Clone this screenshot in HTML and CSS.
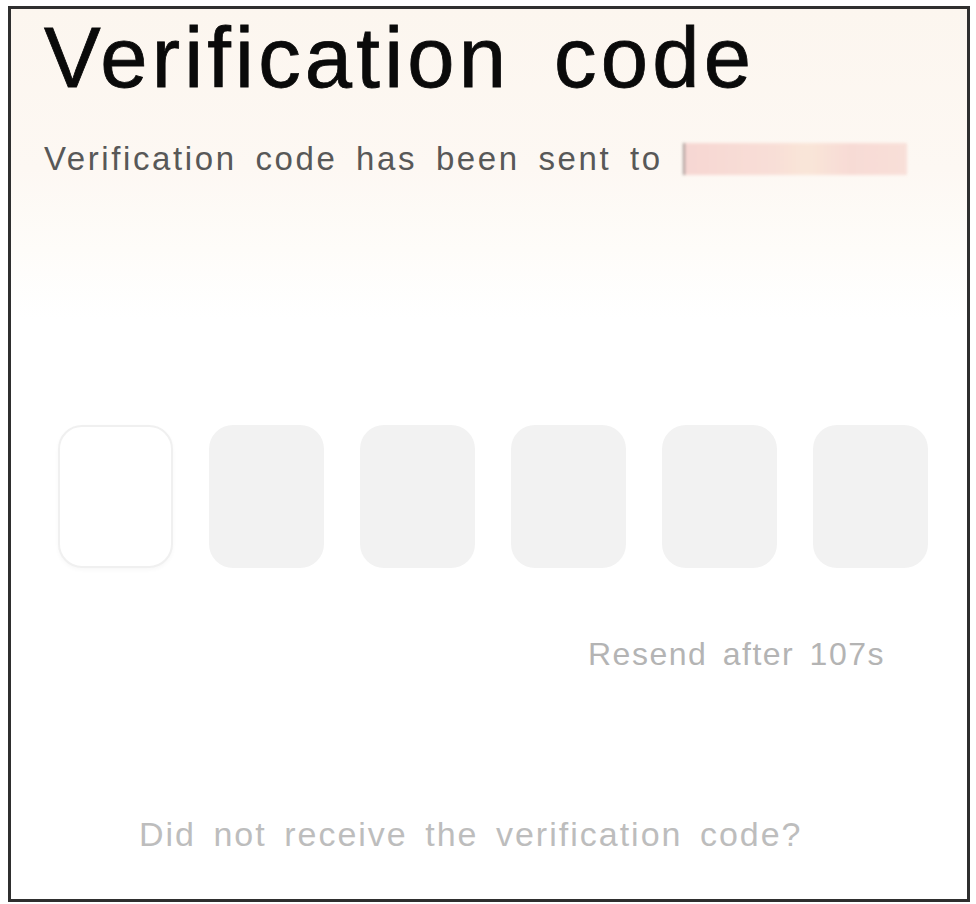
FILE: index.html
```html
<!DOCTYPE html>
<html>
<head>
<meta charset="utf-8">
<link rel="stylesheet" href="styles.css">
</head>
<body>
<div class="frame">
  <div class="screen">
    <h1 class="title">Verification code</h1>
    <p class="subtitle">Verification code has been sent to <span class="masked"><span class="masked-bar"></span></span></p>
    <div class="codes">
      <div class="code code-active"></div>
      <div class="code"></div>
      <div class="code"></div>
      <div class="code"></div>
      <div class="code"></div>
      <div class="code"></div>
    </div>
    <div class="resend">Resend after 107s</div>
    <div class="help">Did not receive the verification code?</div>
  </div>
</div>
</body>
</html>
```

FILE: styles.css
```css
html, body {
  margin: 0;
  padding: 0;
  background: #ffffff;
}

body {
  font-family: "Liberation Sans", Arial, sans-serif;
}

.frame {
  box-sizing: border-box;
  margin: 6px 0 0 8px;
  width: 962px;
  height: 896px;
  border: 3px solid #2f2f2f;
  overflow: hidden;
}

.screen {
  height: 100%;
  background: linear-gradient(180deg, #fcf6ef 0px, #fdf8f3 160px, #fefcf9 240px, #ffffff 310px);
  display: flex;
  flex-direction: column;
}

.title {
  margin: 6px 0 0 33px;
  font-size: 85px;
  line-height: 85px;
  font-weight: normal;
  color: #0a0a0a;
  letter-spacing: 4.2px;
  word-spacing: 16px;
  -webkit-text-stroke: 0.8px #0a0a0a;
}

.subtitle {
  margin: 39px 0 0 33px;
  font-size: 33px;
  line-height: 40px;
  color: #585858;
  letter-spacing: 2.6px;
  word-spacing: 7px;
  display: flex;
  align-items: center;
}

.masked {
  display: inline-block;
  margin-left: 20px;
  width: 222px;
  height: 32px;
  position: relative;
}

.masked-bar {
  display: block;
  width: 100%;
  height: 100%;
  background: linear-gradient(90deg, #f6d3cf 0%, #f8dcd4 40%, #f9e4d6 55%, #f7d8d2 75%, #f8ddd6 100%);
  border-left: 2px solid #9a8a88;
  filter: blur(1.5px);
  opacity: 0.9;
}

.codes {
  margin: 246px 0 0 47px;
  display: flex;
  gap: 36px;
}

.code {
  width: 115px;
  height: 143px;
  border-radius: 24px;
  background: #f2f2f2;
}

.code-active {
  box-sizing: border-box;
  background: #ffffff;
  border: 2px solid #f0f0f0;
  box-shadow: 0 2px 4px rgba(0, 0, 0, 0.03);
}

.resend {
  margin: 66px 82px 0 0;
  align-self: flex-end;
  font-size: 32px;
  line-height: 40px;
  color: #b4b4b4;
  letter-spacing: 1.5px;
  word-spacing: 5px;
}

.help {
  margin: 140px 0 0 128px;
  font-size: 34px;
  line-height: 40px;
  color: #bdbdbd;
  letter-spacing: 2px;
  word-spacing: 6px;
}
```
